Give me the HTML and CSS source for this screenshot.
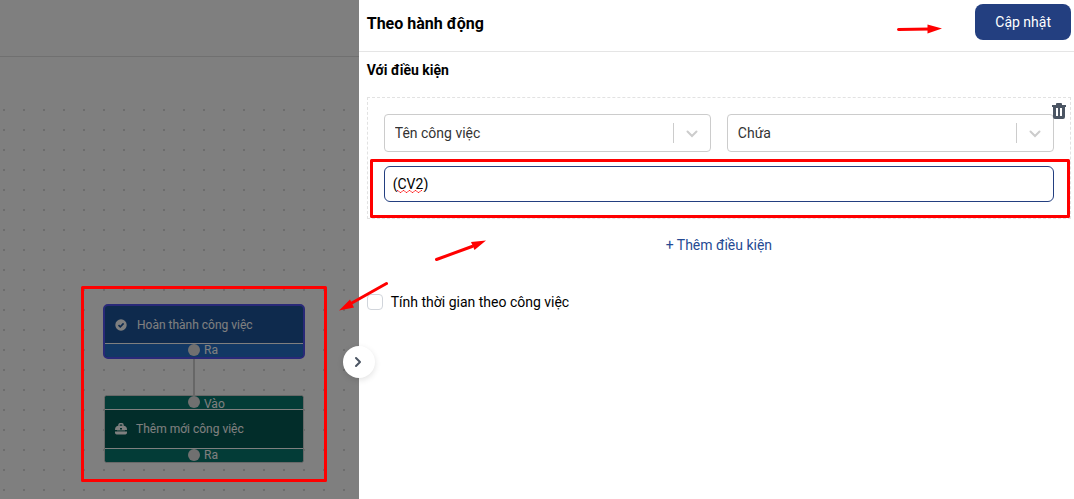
FILE: index.html
```html
<!DOCTYPE html>
<html lang="vi">
<head>
  <meta charset="UTF-8">
  <meta name="viewport" content="width=device-width, initial-scale=1.0">
  <title>Theo hành động</title>
  <link rel="stylesheet" href="styles.css">
</head>
<body>
  <div class="page">
    <main class="board">
      <div class="toolbar"></div>
      <div class="canvas">
        <div class="wire"></div>
        <div class="node node-blue">
          <div class="node-title">
            <svg width="12" height="12" viewBox="0 0 12 12"><circle cx="6" cy="6" r="5.7" fill="#fff"/><path d="M3.5 6.2l1.8 1.7 3.3-3.5" fill="none" stroke="#1c549a" stroke-width="1.6"/></svg>
            <span>Hoàn thành công việc</span>
          </div>
          <div class="port"><i class="dot"></i><span>Ra</span></div>
        </div>
        <div class="node node-green">
          <div class="port port-in"><i class="dot"></i><span>Vào</span></div>
          <div class="node-title">
            <svg width="12" height="12" viewBox="0 0 12 12"><path d="M4 3.2V2Q4 .8 5 .8h2q1 0 1 1.2v1.2" fill="none" stroke="#fff" stroke-width="1.4"/><path d="M3 2.8h6Q12 3.2 12 7H0Q0 3.2 3 2.8zM0 8.6h12v1.2q0 1.7-1.7 1.7H1.7Q0 11.500 0 9.800z" fill="#fff"/><path d="M2 7h8v1.600H2z" fill="#fff" opacity=".4"/><path d="M5 5h2v1.500H5z" fill="#045a54"/></svg>
            <span>Thêm mới công việc</span>
          </div>
          <div class="port"><i class="dot"></i><span>Ra</span></div>
        </div>
      </div>
      <div class="shade"></div>
    </main>

    <aside class="panel">
      <button class="toggle" type="button" aria-label="Đóng">
        <svg width="10" height="12" viewBox="0 0 10 12"><path d="M2 2l4 4-4 4" fill="none" stroke="#4b5563" stroke-width="2" stroke-linecap="round" stroke-linejoin="round"/></svg>
      </button>
      <header class="panel-head">
        <h1>Theo hành động</h1>
        <button class="btn-save" type="button">Cập nhật</button>
      </header>
      <form class="panel-body">
        <h2>Với điều kiện</h2>
        <div class="condition">
          <button class="btn-delete" type="button" aria-label="Xóa">
            <svg width="14" height="16" viewBox="0 0 14 16"><path d="M0 2h4V1q0-1 1-1h4q1 0 1 1v1h4v2h-1v10q0 2-2 2H3q-2 0-2-2V4H0zM4 5v8h2V5zM8 5v8h2V5z" fill="#4b5563" fill-rule="evenodd"/></svg>
          </button>
          <div class="selects">
            <div class="select">
              <select aria-label="Trường"><option>Tên công việc</option></select>
              <svg class="arrow" width="12" height="8" viewBox="0 0 12 8"><path d="M1.5 1.5L6 6l4.5-4.5"/></svg>
            </div>
            <div class="select">
              <select aria-label="Phép so sánh"><option>Chứa</option></select>
              <svg class="arrow" width="12" height="8" viewBox="0 0 12 8"><path d="M1.5 1.5L6 6l4.5-4.5"/></svg>
            </div>
          </div>
          <div class="value">
            <input type="text" value="(CV2)" aria-label="Giá trị" spellcheck="false">
            <svg class="squiggle" width="28" height="3" viewBox="0 0 28 3"><path d="M0 .5h1l2 2h1l2-2h1l2 2h1l2-2h1l2 2h1l2-2h1l2 2h1l2-2h1" fill="none" stroke="#f22" stroke-width="1"/></svg>
          </div>
        </div>
        <button class="btn-add" type="button">+ Thêm điều kiện</button>
        <label class="check"><input type="checkbox"><span>Tính thời gian theo công việc</span></label>
      </form>
    </aside>

    <svg class="marks" width="1074" height="499" viewBox="0 0 1074 499">
      <g fill="none" stroke="#f00" stroke-width="3" stroke-linejoin="round" stroke-linecap="round">
        <rect x="82.5" y="287.5" width="243" height="193"/>
        <rect x="371.5" y="160.5" width="697" height="56"/>
        <path d="M898.5 29.5L930 29M436.5 259.5L472 246.5M386.5 283.5L350 304"/>
      </g>
      <path d="M942 28.5L927.5 24.5V33.5zM486 240.5L471 242l3.5 8zM339 310.5l11-11 4 8z" fill="#f00"/>
    </svg>
  </div>
</body>
</html>
```
FILE: styles.css
```css
* {
  box-sizing: border-box;
  margin: 0;
  padding: 0;
}
body {
  font-family: Roboto, "Liberation Sans", sans-serif;
  font-size: 14px;
  line-height: 20px;
  color: #000;
}
button, input, select {
  font: inherit;
}
button {
  border: 0;
  background: none;
  cursor: pointer;
}
svg {
  display: block;
}
.page {
  position: relative;
  display: flex;
  min-height: 100vh;
  overflow: hidden;
}

/* board */
.board {
  position: relative;
  flex: 1;
  display: flex;
  flex-direction: column;
  background: #fff;
}
.toolbar {
  height: 57px;
  border-bottom: 1px solid #e0e0e0;
}
.canvas {
  position: relative;
  flex: 1;
  margin-top: 43px;
  background: radial-gradient(circle at center, #dadada 1px, transparent 1px) -6px 0 / 20px 20px;
}
.shade {
  position: absolute;
  inset: 0;
  background: rgba(0, 0, 0, .5);
}
.wire {
  position: absolute;
  left: 193px;
  top: 256px;
  width: 2px;
  height: 42px;
  background: #cfcfcf;
}
.node {
  position: absolute;
  width: 200px;
  font-size: 12px;
  line-height: 14px;
  color: #fff;
  overflow: hidden;
}
.node-blue {
  left: 103px;
  top: 204px;
  width: 202px;
  border: 2px solid #5252f0;
  border-radius: 5px;
  background: #1c549a;
}
.node-green {
  left: 104px;
  top: 295px;
  border: 1px solid #d0d0d0;
  border-radius: 3px;
  background: #045a54;
}
.node-title {
  display: flex;
  align-items: center;
  gap: 9px;
  height: 38px;
  padding-left: 10px;
}
.node-blue .node-title {
  height: 37px;
  gap: 10px;
}
.port {
  display: flex;
  align-items: flex-start;
  gap: 4px;
  height: 14px;
  padding-left: 83px;
  border-top: 1px solid #fff;
  line-height: 12px;
}
.port-in {
  border-top: 0;
  border-bottom: 1px solid #fff;
  line-height: 16px;
}
.node-blue .port {
  background: #2470c8;
}
.node-green .port {
  background: #06786e;
}
.dot {
  width: 12px;
  height: 12px;
  border-radius: 50%;
  background: #e0e0e0;
}

/* side panel */
.panel {
  position: relative;
  width: 66.6%;
  background: #fff;
}
.toggle {
  position: absolute;
  left: -16px;
  top: 346px;
  display: flex;
  align-items: center;
  justify-content: center;
  width: 32px;
  height: 32px;
  border-radius: 50%;
  background: #fff;
  box-shadow: 0 2px 6px rgba(0, 0, 0, .12);
}
.panel-head {
  display: flex;
  align-items: center;
  justify-content: space-between;
  height: 52px;
  padding: 0 3px 8px 8px;
  border-bottom: 1px solid #e5e5e5;
}
h1 {
  padding-top: 4px;
  font-size: 16px;
  font-weight: 700;
}
h2 {
  font-size: 14px;
  font-weight: 700;
}
.btn-save {
  height: 36px;
  padding: 0 20px;
  border-radius: 8px;
  background: #233f80;
  color: #fff;
}
.panel-body {
  display: flex;
  flex-direction: column;
  padding: 8px 3px 8px 8px;
}
.condition {
  position: relative;
  display: flex;
  flex-direction: column;
  gap: 14px;
  margin-top: 17px;
  padding: 16px;
  border: 1px dashed #e2e2e2;
}
.btn-delete {
  position: absolute;
  right: 4px;
  top: 5px;
  z-index: 1;
}
.selects {
  display: grid;
  grid-template-columns: 1fr 1fr;
  gap: 16px;
}
.select {
  position: relative;
  display: flex;
}
.select select {
  width: 100%;
  height: 38px;
  padding: 0 10px;
  border: 1px solid #ccc;
  border-radius: 4px;
  background: #fff;
  color: #333;
  appearance: none;
}
.select::after {
  content: "";
  position: absolute;
  right: 37px;
  top: 9px;
  width: 1px;
  height: 20px;
  background: #ccc;
}
.arrow {
  position: absolute;
  right: 13px;
  top: 16px;
  fill: none;
  stroke: #ccc;
  stroke-width: 2;
  stroke-linecap: round;
}
.value {
  position: relative;
  display: flex;
}
.value input {
  width: 100%;
  height: 36px;
  padding: 0 8px;
  border: 1px solid #233f80;
  border-radius: 6px;
  outline: none;
}
.squiggle {
  position: absolute;
  left: 13px;
  top: 24px;
}
.btn-add {
  align-self: center;
  margin-top: 16px;
  color: #254a93;
}
.check {
  display: flex;
  align-items: center;
  gap: 8px;
  margin-top: 37px;
}
.check input {
  width: 16px;
  height: 16px;
  border: 1px solid #d1d5db;
  border-radius: 4px;
  background: #fff;
  appearance: none;
}

/* red frames and arrows */
.marks {
  position: absolute;
  left: 0;
  top: 0;
  pointer-events: none;
}
```
